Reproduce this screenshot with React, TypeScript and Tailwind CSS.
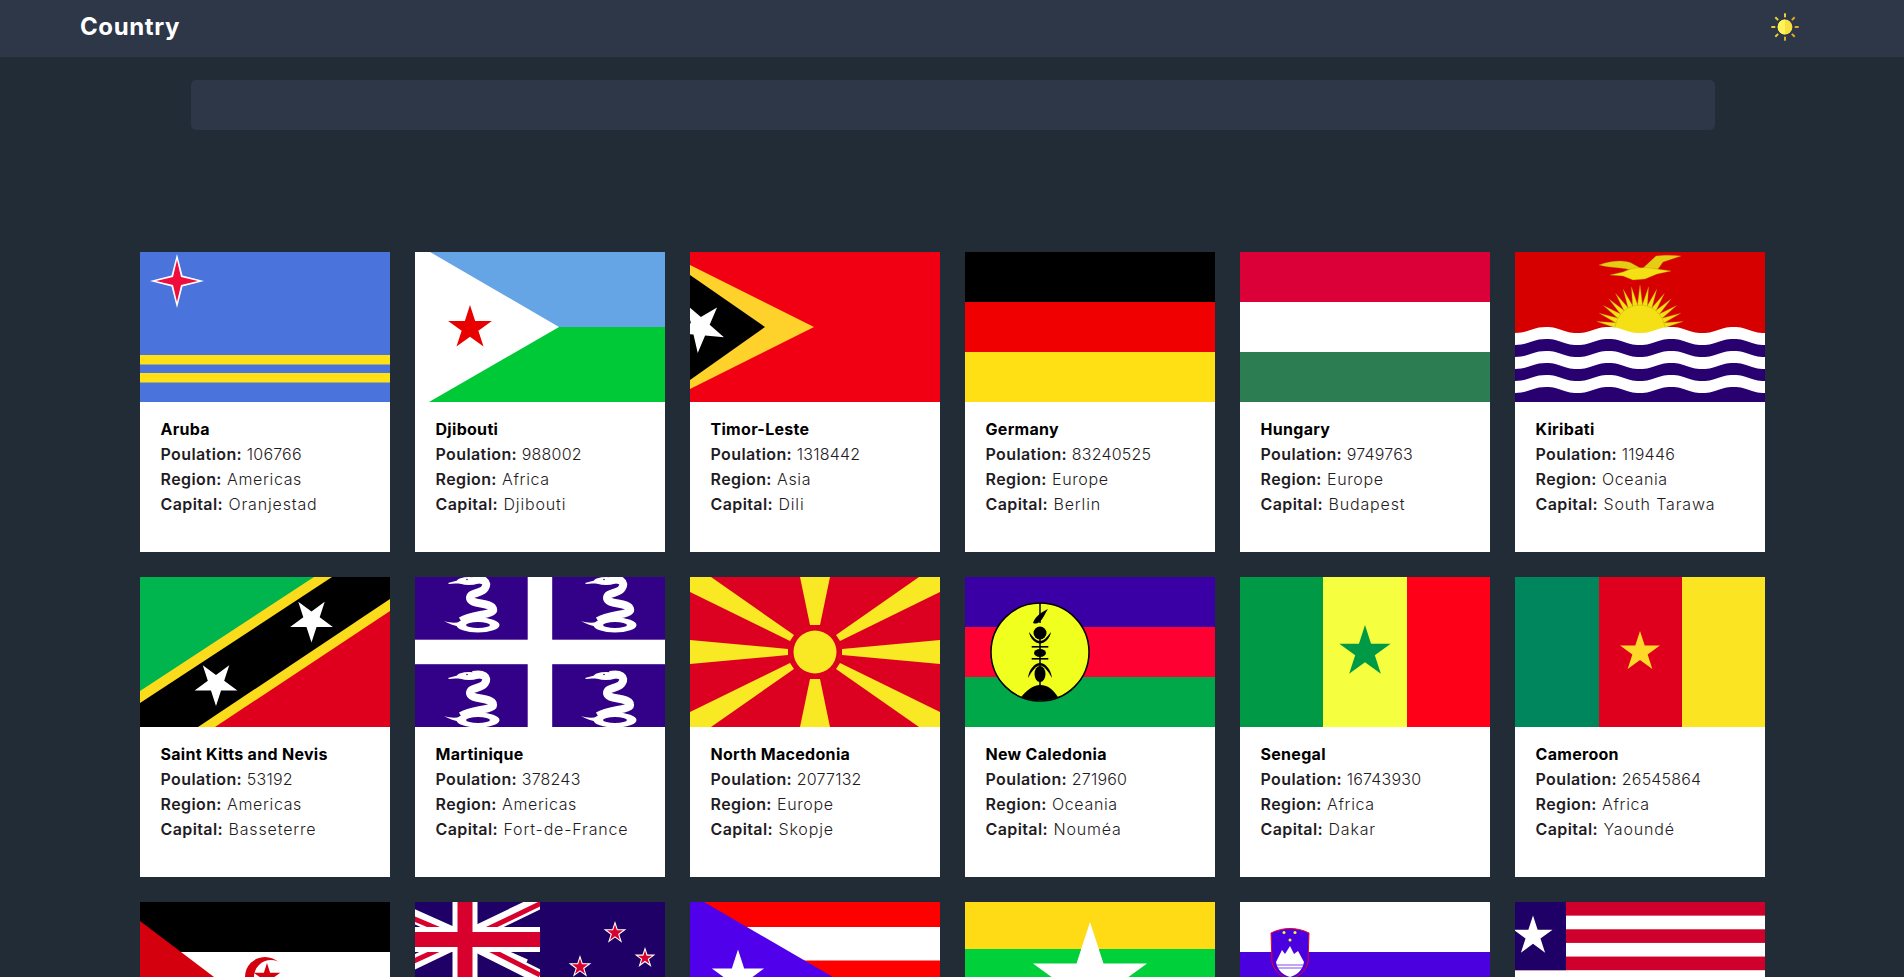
import type { ReactNode } from "react";

function star(cx: number, cy: number, r: number, rot = 0, inner = 0.382) {
  const pts: string[] = [];
  for (let i = 0; i < 10; i++) {
    const rad = i % 2 === 0 ? r : r * inner;
    const a = ((-90 + rot + i * 36) * Math.PI) / 180;
    pts.push(`${(cx + rad * Math.cos(a)).toFixed(2)},${(cy + rad * Math.sin(a)).toFixed(2)}`);
  }
  return pts.join(" ");
}

function wave(y: number) {
  let d = `M0 ${y + 6}`;
  for (let i = 0; i < 4; i++) {
    const x = i * 62.5;
    d += ` C${x + 15} ${y + 6} ${x + 16} ${y} ${x + 31.25} ${y} C${x + 46} ${y} ${x + 47} ${y + 6} ${x + 62.5} ${y + 6}`;
  }
  return `${d} V150 H0 Z`;
}

function Snake({ x, y }: { x: number; y: number }) {
  return (
    <g transform={`translate(${x} ${y})`}>
      <path d="M33 6 L46 2.5 L46 6.5 L40 6.5 L34 7 Z" fill="#fff" />
      <ellipse cx="54" cy="4" rx="12" ry="4" fill="#fff" />
      <path
        d="M58 3 C68 1 74 5 70 11 C67 17 55 15 55 21 C55 28 76 25 78 32 C80 38 58 37 46 44"
        fill="none"
        stroke="#fff"
        strokeWidth="8"
      />
      <path
        fillRule="evenodd"
        d="M41.5 48 A21.5 7.5 0 1 0 84.5 48 A21.5 7.5 0 1 0 41.5 48 Z M51 48 A12 3 0 1 0 75 48 A12 3 0 1 0 51 48 Z"
        fill="#fff"
      />
      <path d="M29 44 C35 46 40 46 46 45 L46 50 C40 49 34 47 29 44 Z" fill="#fff" />
      <circle cx="52" cy="2.5" r="0.8" fill="#330088" />
    </g>
  );
}

const flags: Record<string, ReactNode> = {
  aruba: (
    <>
      <rect width="250" height="150" fill="#4a74dc" />
      <rect y="103" width="250" height="9.5" fill="#ffe115" />
      <rect y="121" width="250" height="9.5" fill="#ffe115" />
      <polygon points="37,2 42.5,23.5 64,29 42.5,34.5 37,56 31.5,34.5 10,29 31.5,23.5" fill="#fff" />
      <polygon points="37,8 41,25 58,29 41,33 37,50 33,33 16,29 33,25" fill="#ef0d3e" />
    </>
  ),
  djibouti: (
    <>
      <rect width="250" height="75" fill="#65a5e6" />
      <rect y="75" width="250" height="75" fill="#00c938" />
      <polygon points="0,0 15,0 144,75 14,150 0,150" fill="#fff" />
      <polygon points={star(55, 76, 23)} fill="#e80000" />
    </>
  ),
  timor: (
    <>
      <rect width="250" height="150" fill="#f00012" />
      <polygon points="0,13 124,75 0,137" fill="#ffd22b" />
      <polygon points="0,23 75,75 0,128" fill="#000" />
      <polygon points={star(10, 75, 26, -31)} fill="#fff" />
    </>
  ),
  germany: (
    <>
      <rect width="250" height="50" fill="#000" />
      <rect y="50" width="250" height="50" fill="#f00000" />
      <rect y="100" width="250" height="50" fill="#ffe015" />
    </>
  ),
  hungary: (
    <>
      <rect width="250" height="50" fill="#dc0039" />
      <rect y="50" width="250" height="50" fill="#fff" />
      <rect y="100" width="250" height="50" fill="#2d7d52" />
    </>
  ),
  kiribati: (
    <>
      <rect width="250" height="150" fill="#d60000" />
      {Array.from({ length: 17 }, (_, i) => {
        const a = (-180 + i * 11.25) * (Math.PI / 180);
        const s = 6.5 * (Math.PI / 180);
        const p = (r: number, t: number) =>
          `${(125 + r * Math.cos(t)).toFixed(1)},${(78 + r * Math.sin(t)).toFixed(1)}`;
        return (
          <polygon
            key={i}
            points={`${p(24, a - s)} ${p(i === 8 ? 45 : 44, a)} ${p(24, a + s)}`}
            fill="#f4e014"
            stroke="#a8940a"
            strokeWidth="0.3"
          />
        );
      })}
      <circle cx="125" cy="78" r="25" fill="#f4e014" stroke="#a8940a" strokeWidth="0.3" />
      <path d="M84 13 C95 9 110 7 118 12 L127 17 L118 19 C110 15 95 16 84 13 Z" fill="#e6cc12" stroke="#a8940a" strokeWidth="0.3" />
      <path d="M127 17 L141 4 C148 3 158 3 166 4 L148 10 L143 17 Z" fill="#e6cc12" stroke="#a8940a" strokeWidth="0.3" />
      <path d="M95 23 L108 20 C115 16 125 15 135 16 L156 19 L142 22 L130 27 L118 28 L108 24 Z" fill="#f4e014" stroke="#a8940a" strokeWidth="0.3" />
      <path d={wave(75)} fill="#fff" />
      <path d={wave(87)} fill="#280070" />
      <path d={wave(99)} fill="#fff" />
      <path d={wave(111)} fill="#280070" />
      <path d={wave(123)} fill="#fff" />
      <path d={wave(135)} fill="#280070" />
    </>
  ),
  kitts: (
    <>
      <rect width="250" height="150" fill="#df001e" />
      <polygon points="0,0 192,0 0,126" fill="#00b44e" />
      <polygon points="174,0 250,0 250,34 75,150 0,150 0,114" fill="#fbdc1c" />
      <polygon points="192,0 250,0 250,22 58,150 0,150 0,126" fill="#000" />
      <polygon points={star(171.5, 43, 22.5, 180)} fill="#fff" />
      <polygon points={star(76, 106.5, 22.5, 180)} fill="#fff" />
    </>
  ),
  martinique: (
    <>
      <rect width="250" height="150" fill="#330088" />
      <Snake x={0} y={0} />
      <Snake x={137} y={0} />
      <Snake x={0} y={95} />
      <Snake x={137} y={95} />
      <rect x="112.7" width="24.5" height="150" fill="#fff" />
      <rect y="62.7" width="250" height="24.5" fill="#fff" />
    </>
  ),
  macedonia: (
    <>
      <rect width="250" height="150" fill="#dc0021" />
      <polygon points="110,0 140,0 130,48 120,48" fill="#f9e824" />
      <polygon points="110,150 140,150 130,102 120,102" fill="#f9e824" />
      <polygon points="0,63 98,72 98,78 0,87" fill="#f9e824" />
      <polygon points="250,63 152,72 152,78 250,87" fill="#f9e824" />
      <polygon points="0,0 21,0 104,58 100,64 0,15" fill="#f9e824" />
      <polygon points="250,0 229,0 146,58 150,64 250,15" fill="#f9e824" />
      <polygon points="0,150 21,150 104,92 100,86 0,135" fill="#f9e824" />
      <polygon points="250,150 229,150 146,92 150,86 250,135" fill="#f9e824" />
      <circle cx="125" cy="75" r="25" fill="#dc0021" />
      <circle cx="125" cy="75" r="21.5" fill="#f9e824" />
    </>
  ),
  caledonia: (
    <>
      <rect width="250" height="50" fill="#3a00a6" />
      <rect y="50" width="250" height="50" fill="#ff0032" />
      <rect y="100" width="250" height="50" fill="#00a84a" />
      <circle cx="75" cy="75" r="49" fill="#f0ff1e" stroke="#000" strokeWidth="1.5" />
      <path d="M75 26 V46 M75 60 V110" stroke="#000" strokeWidth="1.5" />
      <path d="M83 32 C75 36 70 40 68 46 C75 49 78 40 83 32 Z" fill="#000" />
      <circle cx="75" cy="56" r="6.5" fill="#000" />
      <path d="M64 55 C65 62 71 66.5 75 66.5 C79 66.5 85 62 86 55 C82 60 79 64 75 64 C71 64 68 60 64 55 Z" fill="#000" />
      <rect x="66.7" y="69" width="16.6" height="1.6" />
      <ellipse cx="75" cy="76" rx="6" ry="4" />
      <rect x="66.7" y="81" width="16.6" height="1.6" />
      <ellipse cx="75" cy="97" rx="5.5" ry="8" />
      <path d="M63 101 C64 92 70 86 75 86 C80 86 86 92 87 101 C83 94 79 88.5 75 88.5 C71 88.5 67 94 63 101 Z" />
      <path d="M56 120 C62 113 68 108 75 108 C84 108 88 113 93 120 C85 124.5 65 124.5 56 120 Z" />
    </>
  ),
  senegal: (
    <>
      <rect width="83" height="150" fill="#009a46" />
      <rect x="83" width="84" height="150" fill="#f5ff40" />
      <rect x="167" width="83" height="150" fill="#ff0019" />
      <polygon points={star(125, 75, 27)} fill="#009a46" />
    </>
  ),
  cameroon: (
    <>
      <rect width="84" height="150" fill="#00865c" />
      <rect x="84" width="83" height="150" fill="#df001e" />
      <rect x="167" width="83" height="150" fill="#fbe522" />
      <polygon points={star(125, 75, 21)} fill="#ffd92a" />
    </>
  ),
  sahara: (
    <>
      <rect width="250" height="50" fill="#000" />
      <rect y="50" width="250" height="50" fill="#fff" />
      <rect y="100" width="250" height="50" fill="#00a651" />
      <polygon points="0,19 74,75 0,131" fill="#d4000e" />
      <circle cx="125" cy="75" r="20" fill="#d4000e" />
      <circle cx="131" cy="75" r="17" fill="#fff" />
      <polygon points={star(127, 75, 14)} fill="#d4000e" />
    </>
  ),
  newzealand: (
    <>
      <rect width="250" height="150" fill="#1e0066" />
      <svg x="0" y="0" width="125" height="75" viewBox="0 0 125 75">
        <path d="M-10 10.5 L110 64 M-10 64.5 L135 -5 M50 37.5 L135 80" stroke="#fff" strokeWidth="14" />
        <path d="M-10 13 L40 34 M-10 63 L38 41 M62 41 L125 73 M60 33 L135 -3" stroke="#d8002c" strokeWidth="5" />
        <rect x="37.5" width="25" height="75" fill="#fff" />
        <rect y="25" width="125" height="25" fill="#fff" />
        <rect x="42.5" width="15" height="75" fill="#d8002c" />
        <rect y="30" width="125" height="15" fill="#d8002c" />
      </svg>
      <polygon points={star(200, 31, 12)} fill="#fff" />
      <polygon points={star(200, 31, 8.5)} fill="#d8002c" />
      <polygon points={star(230, 56, 11)} fill="#fff" />
      <polygon points={star(230, 56, 7.5)} fill="#d8002c" />
      <polygon points={star(165, 65, 12)} fill="#fff" />
      <polygon points={star(165, 65, 8.5)} fill="#d8002c" />
      <polygon points={star(200, 113, 12)} fill="#fff" />
      <polygon points={star(200, 113, 8.5)} fill="#d8002c" />
    </>
  ),
  puertorico: (
    <>
      <rect width="250" height="150" fill="#ff0000" />
      <rect y="25" width="250" height="33.5" fill="#fff" />
      <rect y="92" width="250" height="33.5" fill="#fff" />
      <polygon points="0,0 14,0 143,75 14,150 0,150" fill="#5000ea" />
      <polygon points={star(48, 75, 27.5)} fill="#fff" />
    </>
  ),
  myanmar: (
    <>
      <rect width="250" height="47" fill="#ffdb15" />
      <rect y="47" width="250" height="53" fill="#00d13b" />
      <rect y="100" width="250" height="50" fill="#e8112d" />
      <polygon points={star(125, 80, 60)} fill="#fff" />
    </>
  ),
  slovenia: (
    <>
      <rect width="250" height="50" fill="#fff" />
      <rect y="50" width="250" height="50" fill="#4b00e0" />
      <rect y="100" width="250" height="50" fill="#e8112d" />
      <path d="M31 31 C43 25 57 25 69 31 L68 60 C66 70 58 75 50 77 C42 75 34 70 32 60 Z" fill="#4b00e0" stroke="#f00020" strokeWidth="1" />
      <circle cx="44" cy="30.5" r="1.5" fill="#f0ff1e" />
      <circle cx="55" cy="30.5" r="1.5" fill="#f0ff1e" />
      <circle cx="50" cy="38" r="1.5" fill="#f0ff1e" />
      <path d="M36 60 L42 48 L45 52 L50 44 L54 52 L58 49 L64 60 C62 70 56 73 50 75 C44 73 38 70 36 60 Z" fill="#fff" />
      <path d="M37 63 H63 M38 66 H62" stroke="#4b00e0" strokeWidth="0.7" />
    </>
  ),
  liberia: (
    <>
      <rect width="250" height="150" fill="#fff" />
      {[0, 2, 4, 6, 8, 10].map((i) => (
        <rect key={i} y={i * 13.64} width="250" height="13.64" fill="#cf002c" />
      ))}
      <rect width="51" height="68.2" fill="#1e0066" />
      <polygon points={star(18, 34, 20.6)} fill="#fff" />
    </>
  ),
};

type Country = {
  flag: string;
  name?: string;
  population?: number;
  region?: string;
  capital?: string;
};

const countries: Country[] = [
  { flag: "aruba", name: "Aruba", population: 106766, region: "Americas", capital: "Oranjestad" },
  { flag: "djibouti", name: "Djibouti", population: 988002, region: "Africa", capital: "Djibouti" },
  { flag: "timor", name: "Timor-Leste", population: 1318442, region: "Asia", capital: "Dili" },
  { flag: "germany", name: "Germany", population: 83240525, region: "Europe", capital: "Berlin" },
  { flag: "hungary", name: "Hungary", population: 9749763, region: "Europe", capital: "Budapest" },
  { flag: "kiribati", name: "Kiribati", population: 119446, region: "Oceania", capital: "South Tarawa" },
  { flag: "kitts", name: "Saint Kitts and Nevis", population: 53192, region: "Americas", capital: "Basseterre" },
  { flag: "martinique", name: "Martinique", population: 378243, region: "Americas", capital: "Fort-de-France" },
  { flag: "macedonia", name: "North Macedonia", population: 2077132, region: "Europe", capital: "Skopje" },
  { flag: "caledonia", name: "New Caledonia", population: 271960, region: "Oceania", capital: "Nouméa" },
  { flag: "senegal", name: "Senegal", population: 16743930, region: "Africa", capital: "Dakar" },
  { flag: "cameroon", name: "Cameroon", population: 26545864, region: "Africa", capital: "Yaoundé" },
  { flag: "sahara" },
  { flag: "newzealand" },
  { flag: "puertorico" },
  { flag: "myanmar" },
  { flag: "slovenia" },
  { flag: "liberia" },
];

function SunIcon() {
  const rays = [0, 45, 90, 135, 180, 225, 270, 315];
  return (
    <svg width="34" height="34" viewBox="0 0 34 34">
      {rays.map((deg) => (
        <rect
          key={deg}
          x="16"
          y="3.3"
          width="2"
          height="4"
          fill={deg >= 45 && deg <= 180 ? "#e0a92a" : "#e8cf3a"}
          transform={`rotate(${deg} 17 17)`}
        />
      ))}
      <circle cx="17" cy="17" r="7.4" fill="#f8e043" />
      <path d="M17 9.6 A7.4 7.4 0 0 0 17 24.4 Z" fill="#fff35a" />
    </svg>
  );
}

function CountryCard({ country }: { country: Country }) {
  return (
    <div className="h-[300px] w-[250px] bg-white">
      <svg width="250" height="150" viewBox="0 0 250 150" className="block">
        {flags[country.flag]}
      </svg>
      {country.name && (
        <div className="pl-[21px] pt-[15px] text-base leading-[25px] text-[#1f1c24]">
          <h3 className="font-bold tracking-[0.3px] text-black">{country.name}</h3>
          <p className="font-light tracking-[0.2px]">
            <span className="font-semibold tracking-[0.4px]">Poulation:</span> {country.population}
          </p>
          <p className="font-light tracking-[0.65px]">
            <span className="font-semibold tracking-[0.4px]">Region:</span> {country.region}
          </p>
          <p className="font-light tracking-[0.85px]">
            <span className="font-semibold tracking-[0.4px]">Capital:</span> {country.capital}
          </p>
        </div>
      )}
    </div>
  );
}

export default function App() {
  return (
    <div className="h-screen overflow-hidden bg-[#212c36] font-['Inter',sans-serif]">
      <header className="flex h-[57px] items-center justify-between bg-[#2d3748] pb-[3px] pl-20 pr-[102px]">
        <h1 className="text-2xl font-bold tracking-[0.6px] text-white">Country</h1>
        <SunIcon />
      </header>
      <input
        type="text"
        className="ml-[191px] mt-[23px] block h-[50px] w-[1524px] rounded-[5px] bg-[#2d3748] px-4 text-white outline-none"
      />
      <div className="mx-auto mt-[122px] grid w-[1625px] grid-cols-6 gap-[25px]">
        {countries.map((country) => (
          <CountryCard key={country.flag} country={country} />
        ))}
      </div>
    </div>
  );
}
